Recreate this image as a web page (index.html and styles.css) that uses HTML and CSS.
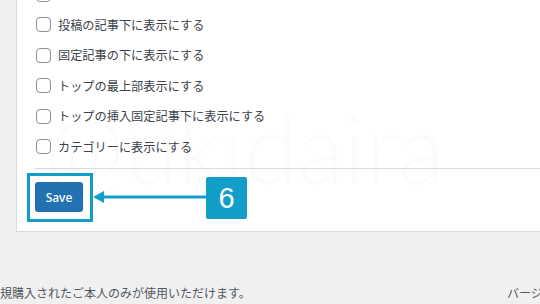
FILE: index.html
```html
<!DOCTYPE html>
<html lang="ja">
<head>
  <meta charset="UTF-8" />
  <meta name="viewport" content="width=device-width, initial-scale=1.0" />
  <title>表示設定</title>
  <link rel="stylesheet" href="styles.css">
</head>
<body>
  <div class="panel">
    <div class="watermark">@ukidaira</div>

    <ul class="options">
      <li><label><input type="checkbox" /> 記事一覧に表示にする</label></li>
      <li><label><input type="checkbox" /> 投稿の記事下に表示にする</label></li>
      <li><label><input type="checkbox" /> 固定記事の下に表示にする</label></li>
      <li><label><input type="checkbox" /> トップの最上部表示にする</label></li>
      <li><label><input type="checkbox" /> トップの挿入固定記事下に表示にする</label></li>
      <li><label><input type="checkbox" /> カテゴリーに表示にする</label></li>
    </ul>

    <div class="save-row">
      <button class="btn-save">Save</button>

      <!-- 説明用の注釈 -->
      <div class="mark-frame"></div>
      <svg class="mark-arrow" width="116" height="14" viewBox="0 0 116 14">
        <polygon points="0,7 11,1 11,13" fill="#119fc9" />
        <rect x="10" y="5.5" width="106" height="3" fill="#119fc9" />
      </svg>
      <div class="mark-badge">6</div>
    </div>
  </div>

  <div class="footer">
    <span class="footer-note">規購入されたご本人のみが使用いただけます。</span>
    <span class="footer-version">バージョン 2.4.1</span>
  </div>
</body>
</html>
```

FILE: styles.css
```css
body {
  margin: 0;
  background-color: #f0f0f1;
  font-family: "Noto Sans CJK JP", "Noto Sans", sans-serif;
  color: #3c434a;
  overflow: hidden;
  height: 304px;
}
.panel {
  position: relative;
  margin-top: -21px;
  margin-left: 16px;
  padding-left: 18px;
  background: white;
  border-left: 1px solid #dcdcde;
  border-bottom: 1px solid #dcdcde;
  overflow: hidden;
}
.watermark {
  position: absolute;
  left: 28px;
  top: 120px;
  font-family: "Lato", sans-serif;
  font-weight: 300;
  font-size: 96px;
  line-height: 1;
  color: rgba(0, 0, 0, 0.016);
  pointer-events: none;
}
.options {
  list-style: none;
  margin: 0;
  padding: 0 0 6px 0;
  border-bottom: 1px solid #dcdcde;
}
.options li {
  height: 30.5px;
  display: flex;
  align-items: center;
}
.options label {
  display: flex;
  align-items: center;
  gap: 7px;
  font-size: 12.2px;
  line-height: 1;
  position: relative;
}
.options input {
  appearance: none;
  margin: 0 0 0 1px;
  width: 15px;
  height: 15px;
  border: 1px solid #8c8f94;
  border-radius: 4px;
  background: white;
}
.save-row {
  position: relative;
  padding: 13px 0 19px 0;
}
.btn-save {
  width: 48px;
  height: 30px;
  background-color: #2271b1;
  color: white;
  border: none;
  border-radius: 3px;
  font-family: "Noto Sans", sans-serif;
  font-size: 12px;
  font-weight: 500;
  padding: 0;
  cursor: pointer;
  display: block;
}
.mark-frame {
  position: absolute;
  left: -8px;
  top: 4px;
  width: 60px;
  height: 43px;
  border: 3px solid #119fc9;
}
.mark-arrow {
  position: absolute;
  left: 58px;
  top: 21px;
}
.mark-badge {
  position: absolute;
  left: 171px;
  top: 8px;
  width: 41px;
  height: 42px;
  background: #119fc9;
  border-radius: 2px;
  color: white;
  font-family: "Liberation Sans", Arial, sans-serif;
  font-size: 29px;
  line-height: 42px;
  text-align: center;
}
.footer {
  display: flex;
  justify-content: space-between;
  margin-top: 54px;
  font-size: 12px;
  line-height: 14px;
  color: #50575e;
}
.footer-version {
  flex: none;
  width: 33px;
  white-space: nowrap;
}
```
